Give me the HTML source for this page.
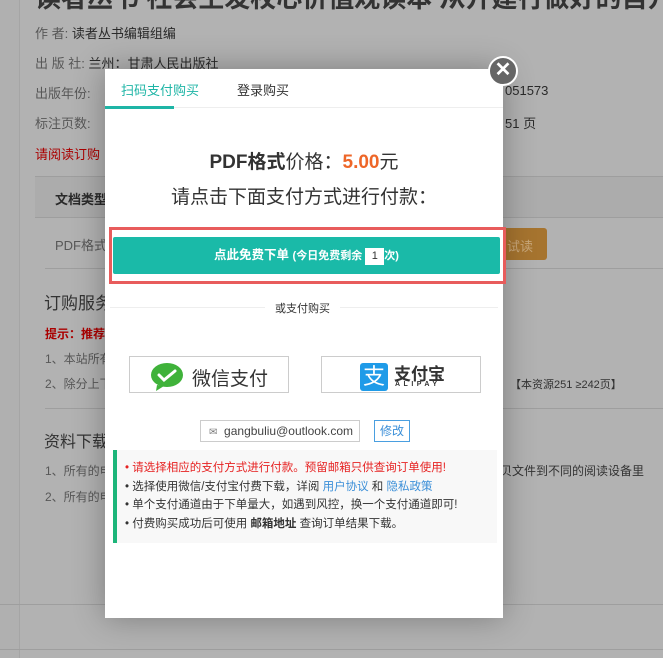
<!DOCTYPE html>
<html><head><meta charset="utf-8"><style>
*{margin:0;padding:0;box-sizing:border-box}
html,body{background:#b2b2b2}
body{width:663px;height:658px;overflow:hidden;font-family:"Liberation Sans","Noto Sans CJK SC",sans-serif;position:relative;color:#222}
.a{position:absolute;white-space:nowrap}
.g{color:#575757;font-size:13px}
.k{color:#2a2a2a;font-size:13px}
.hl{position:absolute;left:45px;right:0;height:1px;background:#9e9e9e}
.modal{position:absolute;left:105px;top:69px;width:398px;height:549px;background:#fff;box-shadow:0 0 30px rgba(0,0,0,.3)}
.m{position:absolute;white-space:nowrap}
.pay{position:absolute;top:287px;width:160px;height:37px;border:1px solid #ccc;background:#fff}
.ul li{list-style:none;font-size:11.5px;line-height:18.5px;color:#333}
</style></head><body>
<div class="a" style="left:0;top:0;width:663px;height:658px;background:#b2b2b2"></div>
<div class="a" style="left:0;top:0;width:20px;height:658px;background:#b0b0b0;border-right:1px solid #a5a5a5"></div>
<div class="a" style="left:35px;top:-22px;font-size:26px;font-weight:bold;color:#333">读者丛书 社会生发杖心价值观读本 从开建行做好的自开</div>
<div class="a g" style="left:35px;top:23px">作 者: <span class="k">读者丛书编辑组编</span></div>
<div class="a g" style="left:35px;top:53px">出 版 社: <span class="k">兰州：甘肃人民出版社</span></div>
<div class="a g" style="left:35px;top:83px">出版年份:</div>
<div class="a k" style="left:505px;top:83px">051573</div>
<div class="a g" style="left:35px;top:113px">标注页数:</div>
<div class="a k" style="left:505px;top:113px">51 页</div>
<div class="a" style="left:35px;top:144px;font-size:13px;color:#a00">请阅读订购</div>
<div class="a" style="left:35px;top:176px;width:628px;height:42px;background:#acacac;border-top:1px solid #9e9e9e;border-bottom:1px solid #9e9e9e"></div>
<div class="a k" style="left:55px;top:189px;font-weight:bold">文档类型</div>
<div class="a g" style="left:55px;top:235px">PDF格式</div>
<div class="hl" style="top:268px"></div>
<div class="a" style="left:495px;top:228px;width:52px;height:32px;background:#a6742f;border-radius:3px;color:#c9a77a;font-size:13px;padding:8px 0 0 12px">试读</div>
<div class="a" style="left:44px;top:289px;font-size:17px;color:#333">订购服务</div>
<div class="a" style="left:45px;top:325px;font-size:12px;color:#a00;font-weight:bold">提示：推荐</div>
<div class="a g" style="left:45px;top:350px;font-size:12px">1、本站所有</div>
<div class="a g" style="left:45px;top:375px;font-size:12px">2、除分上下</div>
<div class="a g" style="left:510px;top:376px;font-size:11px;color:#333">【本资源251 ≥242页】</div>
<div class="hl" style="top:408px"></div>
<div class="a" style="left:44px;top:428px;font-size:16px;color:#333">资料下载</div>
<div class="a g" style="left:45px;top:462px;font-size:12px">1、所有的电</div>
<div class="a g" style="left:488px;top:462px;font-size:12px;color:#333">拷贝文件到不同的阅读设备里</div>
<div class="a g" style="left:45px;top:488px;font-size:12px">2、所有的电</div>
<div class="a" style="left:0;top:604px;width:663px;height:1px;background:#9e9e9e"></div>
<div class="a" style="left:0;top:649px;width:663px;height:1px;background:#9e9e9e"></div>

<div class="modal">
 <div class="m" style="left:16px;top:11px;font-size:13px;color:#1eb5a6">扫码支付购买</div>
 <div class="m" style="left:132px;top:11px;font-size:13px;color:#333">登录购买</div>
 <div class="m" style="left:0;top:38px;width:398px;height:1px;background:#eee"></div>
 <div class="m" style="left:0;top:37px;width:69px;height:3px;background:#1eb5a6"></div>
 <div class="m" style="left:0;width:398px;text-align:center;top:78px;font-size:19px;color:#333"><b>PDF格式</b>价格：<b style="color:#ee6628">5.00</b>元</div>
 <div class="m" style="left:0;width:398px;text-align:center;top:113px;font-size:19px;color:#333">请点击下面支付方式进行付款：</div>
 <div class="m" style="left:4px;top:158px;width:397px;height:57px;border:3px solid #e85c5c"></div>
 <div class="m" style="left:8px;top:168px;width:387px;height:37px;background:#1abaa8;border-radius:2px;color:#fff;font-size:12.5px;font-weight:bold;text-align:center;line-height:37px">点此免费下单 <span style="font-size:11px">(今日免费剩余 <span style="display:inline-block;background:#fff;color:#333;width:19px;height:17px;line-height:17px;font-weight:normal">1</span>次)</span></div>
 <div class="m" style="left:5px;top:238px;width:388px;height:1px;background:#eee"></div>
 <div class="m" style="left:160px;top:231px;background:#fff;padding:0 10px;font-size:11px;color:#333">或支付购买</div>
 <div class="pay" style="left:24px">
  <svg class="m" style="left:21px;top:5px" width="34" height="29" viewBox="0 0 34 29"><ellipse cx="16" cy="13" rx="16" ry="12" fill="#3fb23a"/><path d="M6 23 L5 29 L13 24Z" fill="#3fb23a"/><path d="M8 13 L13 18 L24 9" stroke="#fff" stroke-width="3" fill="none" stroke-linecap="round"/></svg>
  <div class="m" style="left:62px;top:7px;font-size:19px;color:#333">微信支付</div>
 </div>
 <div class="pay" style="left:216px">
  <div class="m" style="left:38px;top:6px;width:28px;height:28px;background:#1f9be8;border-radius:3px;color:#fff;font-size:22px;line-height:28px;text-align:center">支</div>
  <div class="m" style="left:72px;top:3px;font-size:17px;font-weight:bold;color:#333">支付宝</div>
  <div class="m" style="left:73px;top:24px;font-size:7px;letter-spacing:3.5px;font-weight:bold;color:#333">ALIPAY</div>
 </div>
 <div class="m" style="left:95px;top:351px;width:160px;height:22px;border:1px solid #ccc;font-size:12px;color:#444;line-height:20px;padding-left:8px"><span style="font-size:10px;color:#777">✉</span>&nbsp; gangbuliu@outlook.com</div>
 <div class="m" style="left:269px;top:351px;width:36px;height:22px;border:1px solid #4a9fe0;color:#3b8fd8;font-size:12px;text-align:center;line-height:20px">修改</div>
 <div class="m" style="left:8px;top:381px;width:384px;height:93px;background:#f8f8f8;border-left:4px solid #1db57a;padding:9px 0 0 8px">
  <ul class="ul">
   <li style="color:#e62222">• 请选择相应的支付方式进行付款。预留邮箱只供查询订单使用!</li>
   <li>• 选择使用微信/支付宝付费下载，详阅 <span style="color:#3b8fd8">用户协议</span> 和 <span style="color:#3b8fd8">隐私政策</span></li>
   <li>• 单个支付通道由于下单量大，如遇到风控，换一个支付通道即可!</li>
   <li>• 付费购买成功后可使用 <b>邮箱地址</b> 查询订单结果下载。</li>
  </ul>
 </div>
</div>
<div class="a" style="left:488px;top:56px;width:30px;height:30px;border-radius:50%;background:#666;border:2px solid #fff;color:#fff;font-size:20px;font-weight:bold;text-align:center;line-height:25px">✕</div>
</body></html>
